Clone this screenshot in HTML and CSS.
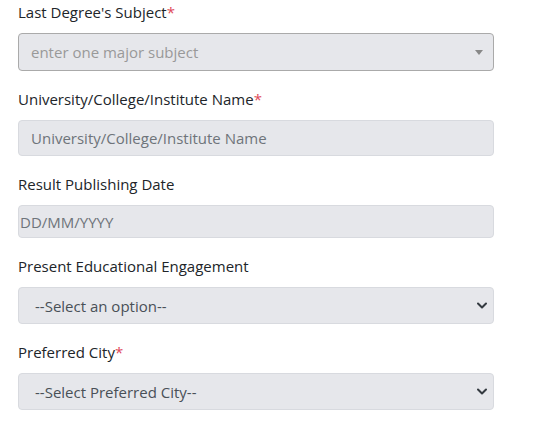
FILE: index.html
```html
<!DOCTYPE html>
<html lang="en">
<head>
<meta charset="utf-8">
<title>Education form</title>
<link rel="stylesheet" href="styles.css">
</head>
<body>
<form class="form">
  <div class="group">
    <label class="label">Last Degree's Subject<span class="req">*</span></label>
    <div class="field field-s2">
      <span class="ph-s2">enter one major subject</span>
      <svg class="tri" width="8" height="5" viewBox="0 0 8 5"><path d="M0 0h8L4 5z" fill="#888"/></svg>
    </div>
  </div>
  <div class="group">
    <label class="label">University/College/Institute Name<span class="req">*</span></label>
    <div class="field field-input"><span class="ph">University/College/Institute Name</span></div>
  </div>
  <div class="group">
    <label class="label">Result Publishing Date</label>
    <div class="field field-date"><span class="ph">DD/MM/YYYY</span></div>
  </div>
  <div class="group">
    <label class="label">Present Educational Engagement</label>
    <div class="field field-select">
      <span class="val">--Select an option--</span>
      <svg class="chev" width="10" height="7" viewBox="0 0 10 7"><path d="M1 1.5l4 4 4-4" fill="none" stroke="#343a40" stroke-width="2" stroke-linecap="round" stroke-linejoin="round"/></svg>
    </div>
  </div>
  <div class="group">
    <label class="label">Preferred City<span class="req">*</span></label>
    <div class="field field-select">
      <span class="val">--Select Preferred City--</span>
      <svg class="chev" width="10" height="7" viewBox="0 0 10 7"><path d="M1 1.5l4 4 4-4" fill="none" stroke="#343a40" stroke-width="2" stroke-linecap="round" stroke-linejoin="round"/></svg>
    </div>
  </div>
</form>
</body>
</html>
```
FILE: styles.css
```css
html, body {
  margin: 0;
  padding: 0;
  background: #fff;
}
body {
  font-family: "Open Sans", "Noto Sans", sans-serif;
  font-size: 15px;
  color: #212529;
}
.form {
  width: 476px;
  padding-left: 18px;
  display: flex;
  flex-direction: column;
  gap: 16px;
}
.group {
  display: flex;
  flex-direction: column;
}
.label {
  display: block;
  line-height: 24px;
  margin-bottom: 9px;
}
.req {
  color: #e04858;
}
.field {
  box-sizing: border-box;
  display: flex;
  align-items: center;
  background: #e6e7eb;
  border: 1px solid #d8dadf;
  border-radius: 4px;
}
.field-s2 {
  height: 38px;
  border-color: #aaa;
  padding: 0 10px 0 12px;
  justify-content: space-between;
}
.ph-s2 {
  color: #999;
}
.field-input {
  height: 36px;
  padding-left: 12px;
}
.ph {
  color: #6e747a;
}
.field-date {
  height: 33px;
  padding-left: 1px;
}
.field-select {
  height: 37px;
  padding: 0 6px 0 16px;
  justify-content: space-between;
}
.val {
  color: #495057;
}
```
